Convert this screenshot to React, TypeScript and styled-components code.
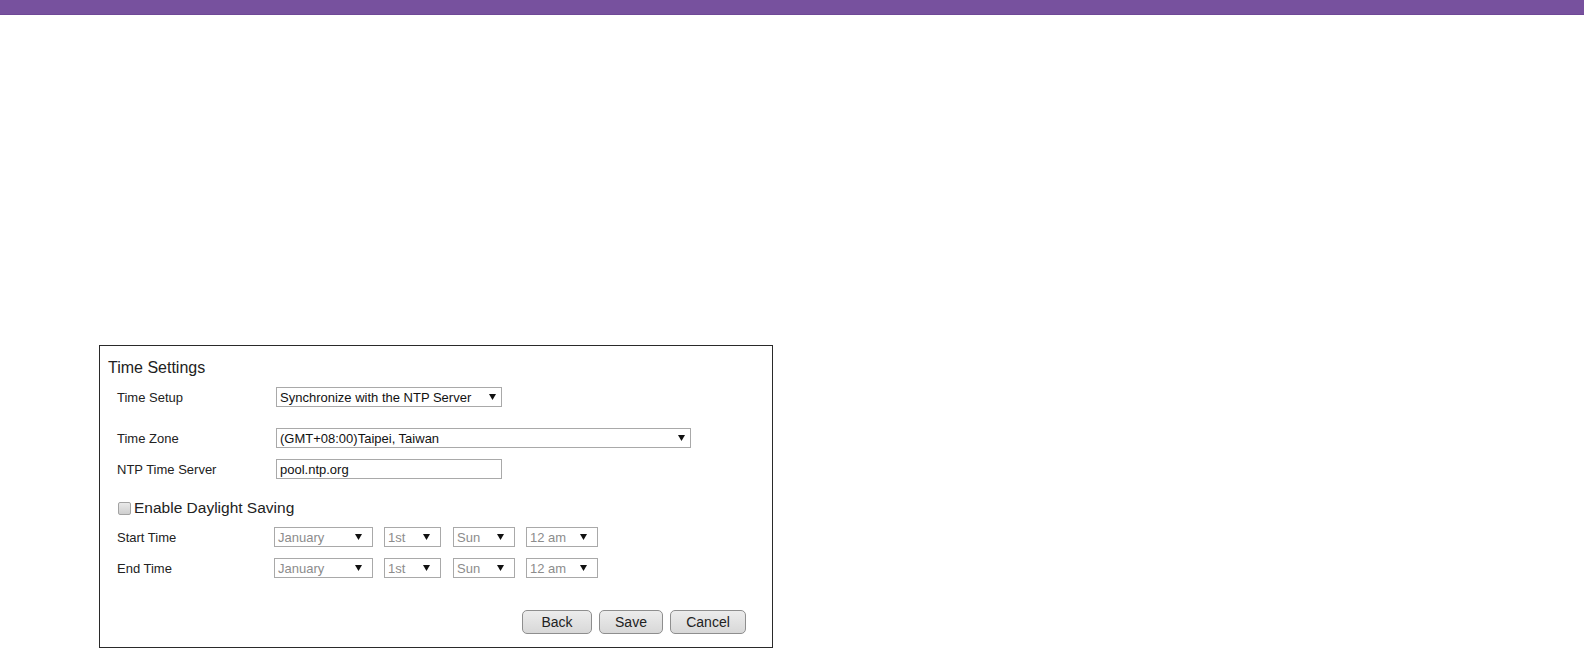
import styled, {createGlobalStyle} from "styled-components";

const GlobalStyle = createGlobalStyle`
 html, body {
  margin: 0;
  padding: 0;
  background: #fff;
  font-family: "Liberation Sans", Arial, sans-serif;
  color: #222;
 }
`;

const Arrow = () => (
 <svg width="7" height="6" viewBox="0 0 7 6">
  <path d="M0 0 H7 L3.5 6 Z" fill="#111" />
 </svg>
);

type SelectProps = {
 value: string;
 width: number;
 disabled?: boolean;
};

// top selects keep the arrow close to the edge, the date ones a bit further in
const Select = ({value, width, disabled}: SelectProps) => (
 <SelectBox $w={width} $disabled={disabled}>
  <span>{value}</span>
  <Arrow />
 </SelectBox>
);

const DateSelects = () => (
 <Controls>
  <Select value="January" width={99} disabled />
  <Select value="1st" width={57} disabled />
  <Select value="Sun" width={62} disabled />
  <Select value="12 am" width={72} disabled />
 </Controls>
);

const App = () => {
 return (
  <>
   <GlobalStyle />
   <TopBar />
   <Panel>
    <Title>Time Settings</Title>

    <Row $mt={10}>
     <Label $w={159}>Time Setup</Label>
     <Select value="Synchronize with the NTP Server" width={226} />
    </Row>

    <Row $mt={21}>
     <Label $w={159}>Time Zone</Label>
     <Select value="(GMT+08:00)Taipei, Taiwan" width={415} />
    </Row>

    <Row $mt={11}>
     <Label $w={159}>NTP Time Server</Label>
     <TextInput defaultValue="pool.ntp.org" />
    </Row>

    <CheckRow $mt={20}>
     <CheckBox />
     <span>Enable Daylight Saving</span>
    </CheckRow>

    <Row $mt={10}>
     <Label $w={157}>Start Time</Label>
     <DateSelects />
    </Row>

    <Row $mt={11}>
     <Label $w={157}>End Time</Label>
     <DateSelects />
    </Row>

    <Buttons>
     <Button $w={70}>Back</Button>
     <Button $w={64}>Save</Button>
     <Button $w={76}>Cancel</Button>
    </Buttons>
   </Panel>
  </>
 );
};

export default App;

const TopBar = styled.div`
 height: 15px;
 background-color: #77519e;
 border-bottom: 1px solid #6f4896;
 box-sizing: border-box;
`;

const Panel = styled.div`
 margin: 330px 0 0 99px;
 width: 674px;
 box-sizing: border-box;
 border: 1px solid #2a2a2a;
 padding: 13px 26px 13px 0;
 display: flex;
 flex-direction: column;
`;

const Title = styled.div`
 font-size: 16px;
 line-height: 18px;
 padding-left: 8px;
 color: #222;
`;

const Row = styled.div<{$mt: number}>`
 display: flex;
 align-items: center;
 height: 20px;
 margin-top: ${({$mt}) => $mt}px;
 padding-left: 17px;
`;

const Label = styled.div<{$w: number}>`
 width: ${({$w}) => $w}px;
 flex-shrink: 0;
 font-size: 13px;
 color: #222;
`;

const Controls = styled.div`
 display: flex;
 align-items: center;
 gap: 11px;

 & > div {
  padding-right: 10px;
 }
 & > :nth-child(3) {
  margin-left: 1px;
 }
`;

const SelectBox = styled.div<{$w: number; $disabled?: boolean}>`
 width: ${({$w}) => $w}px;
 height: 20px;
 box-sizing: border-box;
 border: 1px solid #a9a9a9;
 background: #fff;
 display: flex;
 align-items: center;
 justify-content: space-between;
 padding: 0 5px 0 3px;
 font-size: 13px;
 color: ${({$disabled}) => ($disabled ? "#8c8c8c" : "#111")};
 white-space: nowrap;
`;

const TextInput = styled.input`
 width: 226px;
 height: 20px;
 box-sizing: border-box;
 border: 1px solid #a9a9a9;
 padding: 0 3px;
 margin: 0;
 font-family: "Liberation Sans", Arial, sans-serif;
 font-size: 13px;
 color: #111;
 outline: none;
`;

const CheckRow = styled.div<{$mt: number}>`
 display: flex;
 align-items: center;
 gap: 3px;
 height: 18px;
 margin-top: ${({$mt}) => $mt}px;
 padding-left: 18px;
 font-size: 15.5px;
 color: #222;
`;

const CheckBox = styled.span`
 width: 11px;
 height: 11px;
 border: 1px solid #a3a3a3;
 border-radius: 2px;
 background: linear-gradient(#e9e9e9, #cfcfcf);
`;

const Buttons = styled.div`
 display: flex;
 justify-content: flex-end;
 gap: 7px;
 margin-top: 32px;
`;

const Button = styled.button<{$w: number}>`
 width: ${({$w}) => $w}px;
 height: 24px;
 box-sizing: border-box;
 border: 1px solid #8e8e8e;
 border-radius: 5px;
 background: linear-gradient(#ececec, #d8d8d8);
 font-family: "Liberation Sans", Arial, sans-serif;
 font-size: 14px;
 color: #222;
 padding: 0;
 cursor: pointer;
`;
